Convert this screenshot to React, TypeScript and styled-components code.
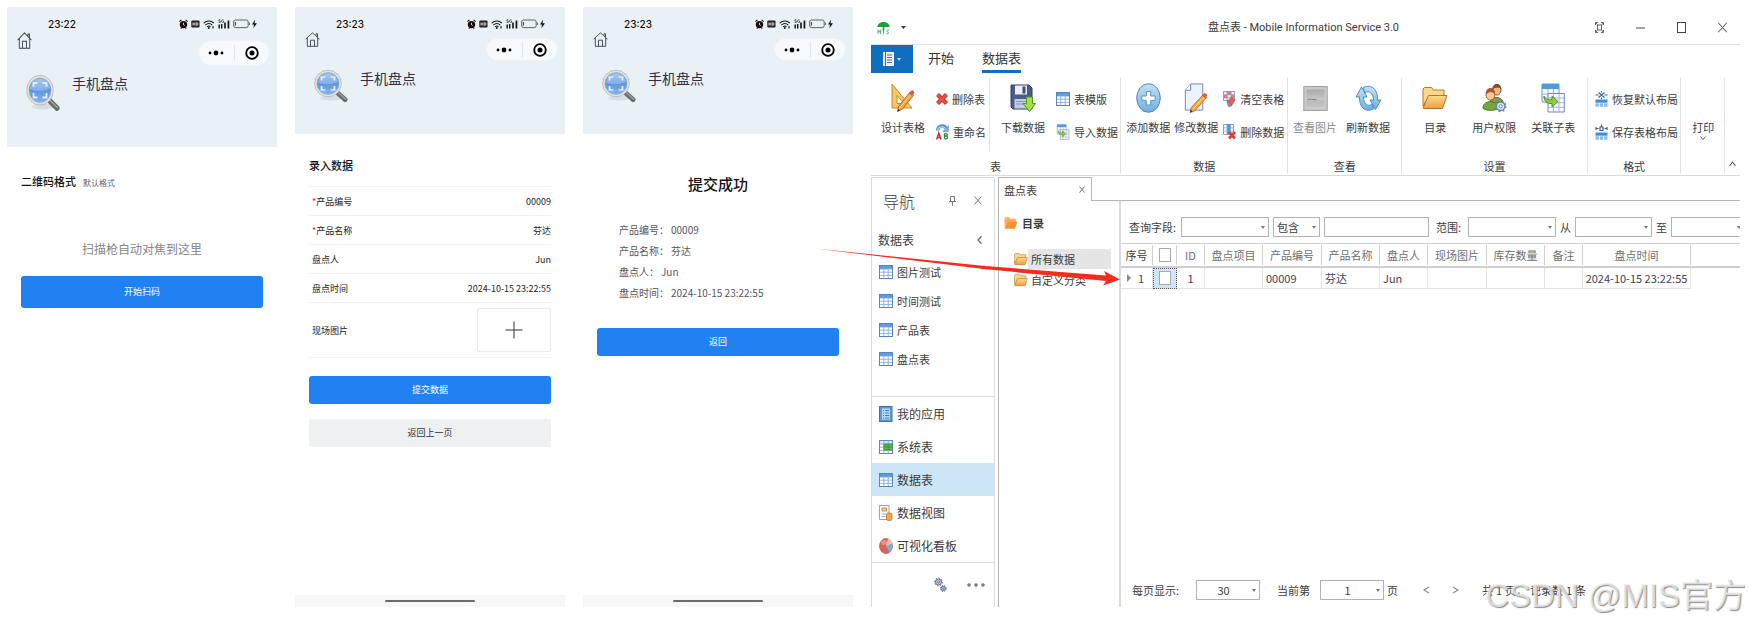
import React from 'react';
import styled, { createGlobalStyle, css } from 'styled-components';

const Global = createGlobalStyle`
  *, *::before, *::after { box-sizing: border-box; }
  body { margin: 0; background: #fff; overflow-x: hidden; }
  body, button, input, select {
    font-family: "Noto Sans CJK SC", "Noto Sans", sans-serif;
  }
  button { border: 0; padding: 0; margin: 0; background: none; color: inherit; cursor: pointer; }
  svg { display: block; flex: none; }
`;

const Page = styled.main`
  display: grid;
  grid-template-columns:
    minmax(0, 270fr) minmax(0, 270fr) minmax(0, 270fr) minmax(0, 869fr);
  column-gap: 18px;
  min-height: 100vh;
  padding: 7px 10px 19px 7px;
`;

/* ---------- phone screens ---------- */

const Phone = styled.section`
  display: flex;
  flex-direction: column;
  min-width: 0;
  color: #222;
`;

const PhoneHeader = styled.header<{ $tall?: boolean }>`
  height: ${p => (p.$tall ? 140 : 127)}px;
  padding: 9px 7px 0 10px;
  background: #e9f0f6;
`;

const StatusBar = styled.div`
  display: flex;
  align-items: center;
  justify-content: space-between;
  height: 16px;
  padding: 0 12px 0 31px;
  font: 500 10px/16px Inter, "Noto Sans", sans-serif;
  color: #111;
`;

const StatusIcons = styled.div`
  display: flex;
  align-items: center;
  gap: 3px;
`;

const PhoneNav = styled.div<{ $tall?: boolean }>`
  display: flex;
  justify-content: space-between;
  align-items: flex-start;
  height: ${p => (p.$tall ? 42 : 37)}px;
`;

const Capsule = styled.div<{ $tall?: boolean }>`
  display: flex;
  align-items: center;
  width: 72px;
  height: ${p => (p.$tall ? 26 : 23)}px;
  margin-top: ${p => (p.$tall ? 8 : 6)}px;
  border-radius: 13px;
  background: #f7fafc;
  border: 1px solid #eef3f7;
`;

const CapsuleButton = styled.button`
  display: flex;
  flex: 1;
  height: 16px;
  align-items: center;
  justify-content: center;
  & + & { border-left: 1px solid #e3e7eb; }
`;

const Brand = styled.div`
  display: flex;
  gap: 12px;
  padding-left: 9px;
`;

const BrandName = styled.h1`
  margin: 0;
  font-size: 14px;
  line-height: 18px;
  font-weight: 400;
  color: #2c2f45;
`;

const PhoneBody = styled.div`
  display: flex;
  flex: 1;
  flex-direction: column;
  padding: 0 14px;
`;

const FormatRow = styled.div`
  display: flex;
  align-items: baseline;
  gap: 7px;
  padding-top: 25px;
  line-height: 18px;
`;

const Heading = styled.h2`
  margin: 0;
  font-size: 11px;
  line-height: 18px;
  font-weight: 500;
  color: #111;
`;

const Hint = styled.span`
  font-size: 8px;
  color: #5d5a70;
`;

const FocusText = styled.p`
  margin: 48px 0 18px;
  font-size: 12px;
  line-height: 18px;
  text-align: center;
  color: #858585;
`;

const PhoneButton = styled.button<{ $plain?: boolean; $tall?: boolean }>`
  height: ${p => (p.$tall ? 32 : 28)}px;
  border-radius: 3px;
  font-size: 9px;
  line-height: 16px;
  background: ${p => (p.$plain ? '#eff0f2' : '#2082f2')};
  color: ${p => (p.$plain ? '#333' : '#fff')};
`;

const Form = styled.form`
  display: flex;
  flex-direction: column;
  padding-top: 22px;
  ${PhoneButton} { margin-top: 18px; }
  ${PhoneButton} + ${PhoneButton} { margin-top: 15px; }
`;

const Fields = styled.div`
  margin-top: 12px;
  border-top: 1px solid #f2f2f3;
`;

const Field = styled.div`
  display: flex;
  align-items: center;
  justify-content: space-between;
  min-height: 29px;
  padding-left: 3px;
  border-bottom: 1px solid #f2f2f3;
  font-size: 9px;
  color: #222;
  b { font-weight: 400; color: #e02020; }
`;

const FieldInput = styled.input`
  flex: 1;
  min-width: 0;
  padding: 0;
  border: 0;
  background: none;
  text-align: right;
  font-size: 9px;
  color: #222;
`;

const PhotoField = styled(Field)`
  height: 55px;
`;

const PhotoButton = styled.button`
  display: flex;
  align-items: center;
  justify-content: center;
  width: 74px;
  height: 44px;
  border: 1px solid #e9eaec;
  border-radius: 2px;
`;

const Success = styled.h2`
  margin: 39px 0 24px;
  font-size: 15px;
  line-height: 22px;
  font-weight: 500;
  text-align: center;
  color: #111;
`;

const Result = styled.dl`
  margin: 0 0 25px;
  padding-left: 22px;
  font-size: 10px;
  line-height: 21px;
  color: #55555f;
  div { display: flex; gap: 2px; }
  dt, dd { margin: 0; }
`;

const GestureBar = styled.div`
  display: flex;
  align-items: center;
  justify-content: center;
  height: 12px;
  background: #f7f7f7;
  &::before {
    content: '';
    width: 90px;
    height: 2px;
    border-radius: 1px;
    background: #6e6a6c;
  }
`;

const HomeIcon = ({ tall }: { tall?: boolean }) => (
  <svg width="15" height={tall ? 17 : 15} viewBox="0 0 15 15" preserveAspectRatio="none" fill="none" stroke="#3b4046" strokeWidth="0.9">
    <path d="M0.6 7.2 7.5.8l6.9 6.4M2.3 6v8.3h10.4V6M5.500 14.2V8.2h4v6M11 3.600V1.800h1.500V5" />
  </svg>
);

const StatusGlyphs = () => (
  <StatusIcons>
    <svg width="9" height="10" viewBox="0 0 9 10">
      <circle cx="4.5" cy="5.6" r="3.7" fill="#111" />
      <path d="M.4 2.6 2.4.8M8.6 2.6 6.6.8M1.8 9.6l.8-1M7.2 9.6l-.8-1" stroke="#111" strokeWidth="1.1" />
      <path d="M4.5 3.8v2l1.2.6" stroke="#fff" strokeWidth=".8" fill="none" />
    </svg>
    <svg width="9" height="8" viewBox="0 0 9 8">
      <rect x=".3" y=".5" width="8.2" height="7" rx="1" fill="#222" />
      <path d="M2 2.4v3.2M4 2.4v3.2M2 4h2M5.4 2.6v2.8h.7c1.2 0 1.2-2.8 0-2.8z" stroke="#fff" strokeWidth=".7" fill="none" />
    </svg>
    <svg width="12" height="9" viewBox="0 0 12 9" fill="none" stroke="#111" strokeWidth="1.1">
      <path d="M.7 3.1c3-2.8 7.2-2.8 10.2 0M2.4 5c2-1.8 4.8-1.8 6.8 0M4.2 6.7c1-.8 2.4-.8 3.3 0" />
      <circle cx="5.8" cy="8" r=".4" fill="#111" />
      <path d="M10 6v2.6" />
    </svg>
    <svg width="12" height="10" viewBox="0 0 12 10" fill="#111">
      <path d="M.5 5.5h1.4V9.6H.5zM3 5h1.4v4.6H3zM6.2 3.6h1.6v6H6.2zM9.6 1.6h1.7v8H9.6z" />
      <path d="M2.4.7H.9v1.4h1.2c.6 0 .6 1.4 0 1.4H.7M5.6 1C4.6.2 3.6.9 3.6 2.1s1 2 2 1.1V2.3H4.8" fill="none" stroke="#111" strokeWidth=".6" />
    </svg>
    <svg width="25" height="10" viewBox="0 0 25 10">
      <rect x=".6" y="1" width="14.6" height="7.6" rx="2" fill="none" stroke="#555" strokeWidth=".9" />
      <path d="M2.4 3v3.6" stroke="#333" strokeWidth="1" />
      <path d="M16.4 3.6v2.4" stroke="#555" strokeWidth="1" />
      <path d="M22 .6 19 5.6h2L20.400 9.200 24 4.200h-2.400z" fill="#111" />
    </svg>
  </StatusIcons>
);

const Magnifier = ({ tall }: { tall?: boolean }) => (
  <svg width="34" height={tall ? 38 : 34} viewBox="0 0 34 34" preserveAspectRatio="none">
    <ellipse cx="17" cy="29" rx="11" ry="2.600" fill="#c9d1d8" opacity=".6" />
    <path d="M22.500 23 31 30.500" stroke="#6a6e68" strokeWidth="5" strokeLinecap="round" />
    <path d="M24 23.400 31.400 30" stroke="#a5a9a1" strokeWidth="1.200" strokeLinecap="round" />
    <circle cx="14" cy="14.500" r="13.300" fill="#e6e5df" stroke="#b4b4ad" strokeWidth=".8" />
    <circle cx="14" cy="14.500" r="11" fill="url(#lens)" stroke="#9aa3ac" strokeWidth=".6" />
    <path d="M4 13.500c5 2.400 15 2.400 20-1A10.300 10.300 0 0 0 4 13.500z" fill="#b7d3f5" opacity=".45" />
    <g fill="none" stroke="#e4effb" strokeWidth="1.700">
      <path d="M7.500 11.500V8h4M16.500 8h4v3.500M20.500 17v4h-4M11.500 21h-4v-4" />
    </g>
  </svg>
);

const PhoneTop = ({ time, tall }: { time: string; tall?: boolean }) => (
  <PhoneHeader $tall={tall}>
    <StatusBar>
      <time>{time}</time>
      <StatusGlyphs />
    </StatusBar>
    <PhoneNav $tall={tall}>
      <button aria-label="主页"><HomeIcon tall={tall} /></button>
      <Capsule $tall={tall}>
        <CapsuleButton aria-label="更多">
          <svg width="16" height="6" viewBox="0 0 16 6"><circle cx="2" cy="3" r="1.400" /><circle cx="8" cy="3" r="2.400" /><circle cx="14" cy="3" r="1.400" /></svg>
        </CapsuleButton>
        <CapsuleButton aria-label="关闭">
          <svg width="14" height="14" viewBox="0 0 14 14"><circle cx="7" cy="7" r="5.800" fill="none" stroke="#000" strokeWidth="1.800" /><circle cx="7" cy="7" r="2.500" /></svg>
        </CapsuleButton>
      </Capsule>
    </PhoneNav>
    <Brand>
      <Magnifier tall={tall} />
      <BrandName>手机盘点</BrandName>
    </Brand>
  </PhoneHeader>
);

const ScanPhone = () => (
  <Phone>
    <PhoneTop time="23:22" tall />
    <PhoneBody>
      <FormatRow><Heading>二维码格式</Heading><Hint>默认格式</Hint></FormatRow>
      <FocusText>扫描枪自动对焦到这里</FocusText>
      <PhoneButton $tall>开始扫码</PhoneButton>
    </PhoneBody>
  </Phone>
);

const entryFields = [
  { id: 'code', label: '产品编号', value: '00009', required: true },
  { id: 'name', label: '产品名称', value: '芬达', required: true },
  { id: 'user', label: '盘点人', value: 'Jun' },
  { id: 'time', label: '盘点时间', value: '2024-10-15 23:22:55' },
];

const EntryPhone = () => (
  <Phone>
    <PhoneTop time="23:23" />
    <PhoneBody>
      <Form onSubmit={e => e.preventDefault()}>
        <Heading>录入数据</Heading>
        <Fields>
          {entryFields.map(f => (
            <Field key={f.id}>
              <label htmlFor={f.id}>{f.required && <b>*</b>}{f.label}</label>
              <FieldInput id={f.id} defaultValue={f.value} />
            </Field>
          ))}
          <PhotoField>
            <span id="photo">现场图片</span>
            <PhotoButton type="button" aria-labelledby="photo">
              <svg width="18" height="18" viewBox="0 0 18 18" stroke="#333" strokeWidth="1"><path d="M9 .5v17M.5 9h17" /></svg>
            </PhotoButton>
          </PhotoField>
        </Fields>
        <PhoneButton type="submit">提交数据</PhoneButton>
        <PhoneButton type="button" $plain>返回上一页</PhoneButton>
      </Form>
    </PhoneBody>
    <GestureBar />
  </Phone>
);

const DonePhone = () => (
  <Phone>
    <PhoneTop time="23:23" />
    <PhoneBody>
      <Success>提交成功</Success>
      <Result>
        {entryFields.map(f => (
          <div key={f.id}><dt>{f.label}：</dt><dd>{f.value}</dd></div>
        ))}
      </Result>
      <PhoneButton>返回</PhoneButton>
    </PhoneBody>
    <GestureBar />
  </Phone>
);

/* ---------- desktop window ---------- */

const Desktop = styled.section`
  position: relative;
  display: flex;
  flex-direction: column;
  min-width: 0;
  font-size: 11px;
  line-height: 16px;
  color: #3b3b3b;
`;

const TitleBar = styled.header`
  display: grid;
  grid-template-columns: 1fr auto 1fr;
  align-items: center;
  height: 38px;
  padding: 4px 10px 0 6px;
  border-bottom: 1px solid #dedede;
`;

const AppMark = styled.div`
  display: flex;
  align-items: center;
  gap: 11px;
`;

const WindowTitle = styled.h1`
  margin: 0;
  font: 400 11px/16px Roboto, "Noto Sans CJK SC", sans-serif;
  white-space: nowrap;
`;

const WindowButtons = styled.div`
  display: flex;
  justify-content: flex-end;
  gap: 25px;
  button { width: 16px; height: 16px; display: grid; place-items: center; }
`;

const RibbonTabs = styled.nav`
  display: flex;
  height: 28px;
  gap: 15px;
`;

const FileButton = styled.button`
  display: flex;
  align-items: center;
  justify-content: center;
  gap: 3px;
  width: 42px;
  background: #106ebe;
`;

const RibbonTab = styled.button<{ $active?: boolean }>`
  height: 28px;
  margin-right: 13px;
  font-size: 13px;
  line-height: 24px;
  color: #333;
  border-bottom: 3px solid ${p => (p.$active ? '#106ebe' : 'transparent')};
`;

const Ribbon = styled.div`
  display: flex;
  height: 103px;
  padding: 5px 0 1px;
  border-bottom: 1px solid #dcdcdc;
`;

const Group = styled.section<{ $share: number }>`
  display: flex;
  flex: ${p => p.$share} 1 0;
  min-width: 0;
  flex-direction: column;
  border-right: 1px solid #e2e2e2;
  h2 {
    margin: 0;
    font-size: 11px;
    line-height: 16px;
    font-weight: 400;
    text-align: center;
  }
`;

const GroupBody = styled.div<{ $pad?: number; $gap?: number }>`
  display: flex;
  height: 80px;
  padding: 5px 0 0 ${p => p.$pad ?? 3}px;
  gap: ${p => p.$gap ?? 0}px;
`;

const Divider = styled.i`
  width: 1px;
  height: 74px;
  margin: -5px 9px 0 3px;
  background: #e2e2e2;
`;

const BigButton = styled.button`
  display: flex;
  flex: none;
  flex-direction: column;
  align-items: center;
  gap: 6px;
  width: 48px;
  height: 54px;
  font-size: 11px;
  line-height: 16px;
  white-space: nowrap;
  &:disabled { color: #8a8a8a; }
  > svg { height: 30px; }
`;

const PrintButton = styled(BigButton)`
  width: 40px;
  height: 66px;
  padding-top: 36px;
  gap: 0;
  > svg { height: 6px; }
`;

const SmallStack = styled.div<{ $gap?: number }>`
  display: flex;
  flex-direction: column;
  gap: 17px;
  padding: 8px 0 0 ${p => p.$gap ?? 3}px;
`;

const SmallButton = styled.button`
  display: flex;
  align-items: center;
  gap: 4px;
  font-size: 11px;
  line-height: 16px;
  white-space: nowrap;
`;

const Collapse = styled.button`
  align-self: flex-end;
  width: 15px;
  height: 20px;
  display: grid;
  place-items: center;
`;

const Workspace = styled.div`
  display: flex;
  flex: 1;
  gap: 3px;
  padding-top: 1px;
`;

const NavPanel = styled.aside`
  display: flex;
  flex: none;
  flex-direction: column;
  width: 124px;
  border: solid #dcdcdc;
  border-width: 1px 1px 0;
`;

const NavTitle = styled.div`
  display: flex;
  align-items: center;
  height: 45px;
  padding: 0 12px 0 11px;
  h2 { flex: 1; margin: 0; font-size: 16px; line-height: 24px; font-weight: 300; }
  button + button { margin-left: 18px; }
`;

const NavHeading = styled.div`
  display: flex;
  align-items: center;
  justify-content: space-between;
  height: 34px;
  padding: 0 11px 0 6px;
  h3 { margin: 0; font-size: 12px; font-weight: 400; }
`;

const NavList = styled.div`
  display: flex;
  flex: 1;
  align-items: flex-start;
  justify-content: space-between;
  padding-right: 7px;
  ul { list-style: none; margin: 0; padding: 0; }
`;

const NavLink = styled.a<{ $large?: boolean; $active?: boolean }>`
  display: flex;
  align-items: center;
  gap: 4px;
  height: ${p => (p.$large ? 33 : 29)}px;
  padding-left: 7px;
  font-size: ${p => (p.$large ? 12 : 11)}px;
  color: #3b3b3b;
  text-decoration: none;
  background: ${p => (p.$active ? '#cce5f7' : 'none')};
`;

const NavModules = styled.nav`
  border: solid #dcdcdc;
  border-width: 1px 0;
`;

const NavFooter = styled.div`
  display: flex;
  align-items: center;
  justify-content: flex-end;
  gap: 20px;
  height: 44px;
  padding-right: 9px;
`;

const Content = styled.div`
  display: flex;
  flex: 1;
  min-width: 0;
  flex-direction: column;
`;

const DocTabs = styled.div`
  display: flex;
  height: 24px;
  &::after { content: ''; flex: 1; border-bottom: 1px solid #b5b5b5; }
`;

const DocTab = styled.div`
  display: flex;
  align-items: center;
  justify-content: space-between;
  width: 94px;
  padding: 0 6px 0 5px;
  border: solid #b5b5b5;
  border-width: 1px 1px 0;
`;

const DocArea = styled.div`
  display: flex;
  flex: 1;
  border-left: 1px solid #b5b5b5;
`;

const Tree = styled.aside`
  flex: none;
  width: 120px;
  padding: 12px 8px 0 5px;
  ul { list-style: none; margin: 15px 0 0 10px; padding: 0; }
  li { display: flex; align-items: center; height: 21px; }
`;

const TreeTitle = styled.div`
  display: flex;
  align-items: center;
  gap: 4px;
  height: 20px;
  h2 { margin: 0; font-size: 11px; font-weight: 700; }
`;

const TreeLink = styled.a<{ $active?: boolean }>`
  flex: 1;
  padding: 2px 0 2px 3px;
  color: #3b3b3b;
  text-decoration: none;
  background: ${p => (p.$active ? '#e5e5e5' : 'none')};
`;

const Main = styled.div`
  display: flex;
  flex: 1;
  min-width: 0;
  flex-direction: column;
  border-left: 2px solid #dadada;
`;

const Filters = styled.form`
  display: flex;
  align-items: center;
  gap: 4px;
  padding: 16px 0 6px 8px;
  overflow: hidden;
  label { flex: none; white-space: nowrap; }
`;

const QueryLabel = styled.label`
  width: 48px;
`;

const RangeLabel = styled.label`
  width: 31px;
  padding-left: 3px;
`;

const boxed = css`
  height: 20px;
  border: 1px solid #b3b3b3;
  border-radius: 0;
  background: #fff;
  font-size: 11px;
  line-height: 16px;
  color: #3b3b3b;
`;

const SelectBox = styled.span<{ $w: number }>`
  position: relative;
  flex: none;
  display: flex;
  width: ${p => p.$w}px;
  &::after {
    content: '';
    position: absolute;
    right: 4px;
    top: 9px;
    border: solid transparent;
    border-width: 3px 2px 0;
    border-top-color: #7b7b7b;
    pointer-events: none;
  }
`;

const Select = styled.select<{ $center?: boolean }>`
  ${boxed}
  appearance: none;
  width: 100%;
  padding: 0 12px 0 3px;
  text-align-last: ${p => (p.$center ? 'center' : 'left')};
`;

const TextBox = styled.input`
  ${boxed}
  flex: none;
  width: 105px;
`;

const DataTable = styled.table`
  width: 100%;
  table-layout: fixed;
  border-collapse: separate;
  border-spacing: 0;
  th, td { padding: 0; font-weight: 400; white-space: nowrap; text-align: center; }
  th { height: 25px; border-top: 1px solid #cfcfcf; border-bottom: 2px solid #cfcfcf; color: #6f6f6f; }
  th:first-child { color: #3b3b3b; }
  th > span { display: block; height: 20px; line-height: 20px; border-right: 1px solid #cfcfcf; }
  th:last-child > span { border: 0; }
  td { height: 21px; border-right: 1px solid #e3e3e3; border-bottom: 1px solid #e3e3e3; color: #454052; }
  td:last-child { border: 0; }
`;

const LeftCell = styled.td`
  && { text-align: left; padding-left: 3px; }
`;

const MarkedCell = styled.td`
  && { background: #cfe6f8; outline: 1px dotted #555; outline-offset: -1px; }
`;

const RowNumber = styled.span`
  display: flex;
  align-items: center;
  gap: 7px;
  padding-left: 6px;
`;

const Check = styled.input`
  appearance: none;
  display: block;
  width: 12px;
  height: 14px;
  margin: 0 auto;
  border: 1px solid #a9a9a9;
  background: #fff;
`;

const CheckHead = styled.span`
  padding-top: 3px;
`;

const Pager = styled.footer`
  display: flex;
  align-items: center;
  margin-top: auto;
  padding: 0 0 7px 11px;
  white-space: nowrap;
`;

const PagerLabel = styled.label<{ $w: number; $pad?: number }>`
  width: ${p => p.$w}px;
  padding-left: ${p => p.$pad ?? 0}px;
`;

const PagerButton = styled.button`
  display: grid;
  place-items: center;
  width: 29px;
  height: 20px;
`;

const Total = styled.p`
  display: flex;
  gap: 3px;
  margin: 0 0 0 12px;
`;

const Watermark = styled.div`
  position: absolute;
  right: -6px;
  bottom: -9px;
  font: 33px/40px "Liberation Sans", "Noto Sans CJK SC", sans-serif;
  color: rgba(240, 240, 240, 0.75);
  text-shadow: 1px 1px 1px #8c8c8c;
  white-space: nowrap;
  pointer-events: none;
`;

const ArrowLayer = styled.svg`
  position: absolute;
  left: -56px;
  top: 236px;
  pointer-events: none;
`;

/* ---------- icons ---------- */

const GridIcon = ({ green }: { green?: boolean }) => (
  <svg width="14" height="14" viewBox="0 0 14 14">
    <rect x=".5" y=".5" width="13" height="13" fill="#fff" stroke="#6f9fd4" />
    <path d="M.5.5h13v3.500H.5z" fill={green ? '#d6e7f8' : '#5b9bdc'} />
    {green && <path d="M5 4h8.500v6H5z" fill="#5fbe28" />}
    <path d="M.5 4h13M.5 7.200h13M.5 10.400h13M4.800 1v12.500M9.200 1v12.500" stroke="#79a3d6" strokeWidth=".8" fill="none" />
    {green && <path d="M5 4h8.500v6H5zM5 7h8.500M9.200 4v6" stroke="#2d8a1c" strokeWidth=".8" fill="none" />}
    <rect x=".5" y=".5" width="13" height="13" fill="none" stroke="#4f82bd" strokeWidth=".8" />
  </svg>
);

const FolderIcon = ({ size = 14, flat }: { size?: number; flat?: boolean }) => (
  <svg width={size} height={size} viewBox="0 0 26 24">
    <path d="M1 20V3l1.500-1.500h7L11.500 4H22v6H7z" fill={flat ? '#ffab5e' : '#fbd88a'} stroke={flat ? 'none' : '#b07a2c'} />
    <path d="M1.200 21.500 6.500 9.500H25L20.500 22.500H1.500z" fill={flat ? '#fb9333' : 'url(#folder)'} stroke={flat ? 'none' : '#b5752a'} />
  </svg>
);

const DeleteIcon = () => (
  <svg width="12" height="12" viewBox="0 0 12 12">
    <path d="m1.500 1.500 9 9M10.500 1.500l-9 9" stroke="#a8281e" strokeWidth="4" />
    <path d="m1.700 1.700 8.600 8.600M10.300 1.700l-8.600 8.600" stroke="#ea5145" strokeWidth="2.600" />
  </svg>
);

const DesignIcon = () => (
  <svg width="24" height="30" viewBox="0 0 24 30">
    <path d="M1 1v24h20zM6 12.500l7 8H6z" fill="#f7c566" stroke="#c28a37" fillRule="evenodd" />
    <path d="m6.500 28.500 1-5L19 9l3.500 3.500L11 26.500z" fill="#f3a33c" stroke="#a8542a" strokeWidth=".8" />
    <path d="m18 10 2.500-2.500c1-.8 3.500 1.500 2.600 2.800L21 13z" fill="#e5573f" />
    <path d="m8.500 25 11-13" stroke="#ffe09a" />
    <path d="m6.500 28.500.6-2.600 1.800 1.600z" fill="#222" />
  </svg>
);

const RenameIcon = () => (
  <svg width="13" height="16" viewBox="0 0 13 16" fill="none">
    <path d="M1.500 6.500C2 1.500 8 .5 10 4.500" stroke="#4d8cc9" strokeWidth="3.400" />
    <path d="M1.500 6C2.500 2 8 1.500 10 5" stroke="#a4d2f3" strokeWidth="1.500" />
    <path d="M12.600 1.500v6H7z" fill="#7bb8e6" stroke="#4d8cc9" strokeWidth=".6" />
    <path d="M.6 15.500 2.800 9l2.200 6.500M1.400 13.400h2.800" stroke="#d02828" strokeWidth="1.500" />
    <path d="M8.500 9.500v5.300M8.500 9.600h1.500c1.700 0 1.700 2.400 0 2.400H8.500M10 12c2 0 2 2.900 0 2.900H8.500" stroke="#2d8f38" strokeWidth="1.400" />
  </svg>
);

const SaveIcon = () => (
  <svg width="26" height="30" viewBox="0 0 26 30">
    <path d="M1 2h18l3 3v21H3l-2-2z" fill="#4b5d87" stroke="#2e3c60" />
    <path d="M5 2.500h12v9H5z" fill="#e9eef7" /><path d="M12.500 3.500h3v7h-3z" fill="#3f4f75" />
    <path d="M4.500 16h13v9.500h-13z" fill="#c5cee0" /><path d="M6 18.500h10M6 21h10" stroke="#8694b3" />
    <path d="M16.500 14h6v6.500h3L19.500 28.500 13 20.500h3.500z" fill="#a5df3f" stroke="#4b9a26" />
  </svg>
);

const MoveGridIcon = ({ size = 14 }: { size?: number }) => (
  <svg width={size} height={size === 14 ? 16 : 30} viewBox="0 0 24 30">
    <path d="M1 1h17v18H1z" fill="#f5f9ff" stroke="#6a94c8" />
    <path d="M1 1h17v5H1z" fill="#4f9cdc" /><path d="M1 11h17M1 15h17M7 6v13M12.500 6v13" stroke="#9cb8dc" />
    <path d="M7 10.500h16.300V29H7z" fill="#f8faff" stroke="#7287b8" /><path d="M7 15h16M7 19.700h16M7 24.300h16M12.400 11v18M18 11v18" stroke="#a5b2d5" />
    <path d="M3 13c1.500 4 5 4 8 3.500v-3.500l6 5.500-6 5.500v-3.500C6 21 3 18 3 13z" fill="#91ce36" stroke="#4d8f22" />
  </svg>
);

const AddIcon = () => (
  <svg width="25" height="30" viewBox="0 0 25 30">
    <ellipse cx="12.500" cy="15" rx="11.800" ry="14.300" fill="url(#blueBall)" stroke="#4f86bd" />
    <path d="M10.300 8.500h4.400V13h4.500v4.300h-4.500V22h-4.400v-4.700H5.800V13h4.500z" fill="#fff" stroke="#5b94c9" />
  </svg>
);

const EditIcon = () => (
  <svg width="24" height="31" viewBox="0 0 24 31">
    <path d="M6.500 1H19v27H1V7.500z" fill="#edf3fd" stroke="#6f83b6" /><path d="M6.500 1v6.500H1" fill="#fff" stroke="#6f83b6" />
    <path d="m6 30.500 1-5L19.500 12l3.500 3L10.500 29z" fill="#f5a93e" stroke="#a55d27" strokeWidth=".8" />
    <path d="m18.500 13 2-2.300c1-.8 3.600 1.300 2.800 2.700L21.500 16z" fill="#e0553f" /><path d="m8.800 27 11.500-12.300" stroke="#ffdf94" />
    <path d="m6 30.500.5-2.700 2 1.500z" fill="#222" />
  </svg>
);

const ClearIcon = () => (
  <svg width="13" height="16" viewBox="0 0 13 16">
    <path d="M.5.500h11v9H.5z" fill="#f9e6ea" stroke="#7a88c0" strokeWidth=".8" />
    <path d="M4 1h4v3H4zM1 4h3v3H1zM8 4h3v3H8z" fill="#e57b83" /><path d="M.5 3.700h11M.5 6.700h11M4.200.5v9M8 .5v9" stroke="#8b91c2" strokeWidth=".7" />
    <path d="m4 10.500 4.500-4 3.500 2-3.500 6.500H5.500z" fill="#ee5e4a" stroke="#933" strokeWidth=".5" /><path d="m4 10.500 3 1.500v3.500H5.500z" fill="#7aa5e0" stroke="#456fae" strokeWidth=".5" />
  </svg>
);

const RemoveIcon = () => (
  <svg width="13" height="16" viewBox="0 0 13 16">
    <path d="M.5.500h10v10H.5z" fill="#f4f9ff" stroke="#5a8bc6" strokeWidth=".8" /><path d="M4 .5h3.500v10H4z" fill="#4f8fd4" />
    <path d="M.5 3.800h10M.5 7.200h10M4 .5v10M7.500.500v10" stroke="#86abd9" strokeWidth=".7" />
    <path d="m6 8 6 6.500M12 8l-6 6.500" stroke="#dd3f35" strokeWidth="2.600" />
  </svg>
);

const PictureIcon = () => (
  <svg width="25" height="30" viewBox="0 0 25 30">
    <rect x=".8" y="3.500" width="23.400" height="24" fill="#c9c9c9" stroke="#a0a0a0" /><rect x="3.500" y="6.500" width="18" height="18" fill="url(#gray)" />
    <path d="M3.500 17.500c6-1 12 .5 18-.5v7.500h-18z" fill="#a8a8a8" opacity=".5" /><path d="M4.500 16.500c3-1 5 .6 9 0" stroke="#808080" fill="none" />
  </svg>
);

const RefreshIcon = () => (
  <svg width="27" height="30" viewBox="0 0 27 30" fill="url(#blueBall)" stroke="#3f83ba" strokeWidth=".9">
    <path d="M8.500 4.500C17 .5 23 7 22.500 17H26l-5.500 9.500L15 17h3.500C18.500 10.500 14 6.500 9.500 10z" />
    <path d="M18.500 26C10 30 4 24 4.500 14H1L6.500 4 12 14H8.500c0 6.500 4.500 10.500 9 7z" />
  </svg>
);

const UsersIcon = () => (
  <svg width="25" height="31" viewBox="0 0 25 31">
    <path d="M8 20c0-7 13-7 13.500 1z" fill="#8a9a42" stroke="#5b6f24" /><ellipse cx="15" cy="7" rx="4.200" ry="5.500" fill="#eebb86" stroke="#8b4c20" /><path d="M10.500 7c-.5-8 9-8 9 0-2-3-6-3-9 0z" fill="#8a4a20" />
    <path d="M.6 26c-.5-9 15.500-9 16 0-3 3-13 3-16 0z" fill="#77a63e" stroke="#4b7a22" /><ellipse cx="8.300" cy="12" rx="4.500" ry="5.800" fill="#f6c999" stroke="#9b5a28" /><path d="M3.500 12c-.5-9 10-9 9.600 0-2.600-3.500-6-3.500-9.600 0z" fill="#a55b26" />
    <circle cx="18.800" cy="24" r="4.400" fill="#dce7f5" stroke="#6584b0" strokeWidth="1.400" /><circle cx="18.800" cy="24" r="5.500" fill="none" stroke="#6584b0" strokeWidth="1.300" strokeDasharray="2 2.300" /><circle cx="18.800" cy="24" r="1.700" fill="#fff" stroke="#6584b0" />
  </svg>
);

const LayoutIcon = ({ restore }: { restore?: boolean }) => (
  <svg width="13" height="16" viewBox="0 0 13 16" fill="none">
    <path d="M.5 8.500h12v3.200H.5z" fill="#3f8ed8" /><path d="M.5 12.200h3.400v3.500H.5zM4.800 12.200h3.400v3.500H4.800zM9.100 12.200h3.400v3.500H9.100z" fill="#8dbbe8" />
    {restore ? <path d="M.5 4h3M9.500 4h3M3.500 1.500l6 5M9.500 1.500l-6 5M6.500 0v1.500M6.500 6.500V8" stroke="#3d5c85" strokeWidth="1.200" /> : <path d="M.5 4.500h3M9.500 4.500h3M1 3v3M12 3v3M5 3h3v3.500H5zM6.500 .5V3" stroke="#3d5c85" strokeWidth="1.200" />}
  </svg>
);

const AppsIcon = () => (
  <svg width="14" height="16" viewBox="0 0 14 16"><rect x=".5" y=".5" width="12.500" height="15" fill="#5c9ad6" stroke="#3d73ad" /><path d="M3 2.500h8v11H3z" fill="#b9d9f6" /><path d="M4 4.500h1M6 4.500h4M4 7h1M6 7h4M4 9.500h1M6 9.500h4M4 12h1M6 12h4" stroke="#3f78b5" /></svg>
);
const ViewIcon = () => (
  <svg width="14" height="16" viewBox="0 0 14 16"><path d="M.5.500h9.500v14H.5z" fill="#fff" stroke="#85a7cf" /><path d="M3 3h4.500v3H3z" fill="#fbd3a2" stroke="#e2862d" /><path d="M2.500 9h5M2.500 11.500h4" stroke="#8eb0da" /><path d="M7.500 9c0-1.400 5.500-1.400 5.500 0v5.500c0 1.400-5.500 1.400-5.500 0z" fill="#f5a837" stroke="#b86b1e" strokeWidth=".7" /></svg>
);
const PieIcon = () => (
  <svg width="14" height="16" viewBox="0 0 14 16"><ellipse cx="7" cy="8" rx="6.500" ry="7.500" fill="#d9645b" stroke="#a9473f" strokeWidth=".6" /><path d="M7 8 9 .8c4 1.500 5 4 4.300 5.500z" fill="#f5c0a0" /><path d="m7 8 6-2.500c1 4-.5 6.500-2.500 8.500z" fill="#78b0e2" /><ellipse cx="5" cy="4.500" rx="3" ry="2.500" fill="#fff" opacity=".3" /></svg>
);
const GearsIcon = () => (
  <svg width="13" height="16" viewBox="0 0 13 16" fill="#c8d1e6" stroke="#5d6c94"><circle cx="4.500" cy="5" r="3" /><circle cx="4.500" cy="5" r="3.900" fill="none" strokeDasharray="1.500 1.500" /><circle cx="4.500" cy="5" r="1" fill="#fff" /><circle cx="9.300" cy="11.500" r="2.200" /><circle cx="9.300" cy="11.500" r="3" fill="none" strokeDasharray="1.200 1.200" /><circle cx="9.300" cy="11.500" r=".7" fill="#fff" /></svg>
);
const Chevron = ({ d, color = '#666' }: { d: string; color?: string }) => (
  <svg width="7" height="8" viewBox="0 0 7 8" fill="none" stroke={color} strokeWidth="1.200"><path d={d} /></svg>
);

/* ---------- desktop parts ---------- */

const Title = () => (
  <TitleBar>
    <AppMark>
      <svg width="13" height="14" viewBox="0 0 13 14">
        <path d="M.3 6C1-.8 12-.8 12.700 6z" fill="#1ba237" /><path d="M5.700 5h1.600v5H5.700z" fill="#1ba237" />
        <path d="M1 13V8.800l1.300 2.500L3.600 8.800V13M6.500 10v3.200M12 9.300c-1.500-1-3 .5-1.500 1.500 2 .8 1 2.800-1.200 1.700" stroke="#4fb765" fill="none" />
      </svg>
      <svg width="5" height="3" viewBox="0 0 5 3"><path d="M0 0h5L2.500 3z" fill="#333" /></svg>
    </AppMark>
    <WindowTitle>盘点表 - Mobile Information Service 3.0</WindowTitle>
    <WindowButtons>
      <button aria-label="全屏"><svg width="9" height="11" viewBox="0 0 9 11" fill="none" stroke="#555" strokeWidth=".9"><path d="M.5 3V.5H3M6 .5h2.500V3M8.500 8v2.500H6M3 10.500H.5V8M2.500 3h4v5h-4zM1 1l1.500 2M8 1 6.500 3M1 10l1.500-2M8 10 6.500 8" /></svg></button>
      <button aria-label="最小化"><svg width="9" height="2"><path d="M0 1h9" stroke="#444" /></svg></button>
      <button aria-label="最大化"><svg width="9" height="11"><rect x=".5" y=".5" width="8" height="10" fill="none" stroke="#444" /></svg></button>
      <button aria-label="关闭窗口"><svg width="9" height="11" stroke="#444"><path d="m0 .5 9 10M9 .5l-9 10" /></svg></button>
    </WindowButtons>
  </TitleBar>
);

const RibbonBar = () => (
  <>
    <RibbonTabs>
      <FileButton aria-label="文件">
        <svg width="11" height="14" viewBox="0 0 11 14"><path d="M.5.500h10v13H.5z" fill="#e8eef4" stroke="#fff" /><path d="M2.500 0v14" stroke="#4a6c8e" /><path d="M4 3h5M4 5.500h5M4 8h5M4 10.500h5" stroke="#5b6f82" /></svg>
        <svg width="4" height="3"><path d="M0 0h4L2 3z" fill="#cfe2f3" /></svg>
      </FileButton>
      <RibbonTab>开始</RibbonTab>
      <RibbonTab $active>数据表</RibbonTab>
    </RibbonTabs>
    <Ribbon>
      <Group $share={251}>
        <GroupBody $pad={8}>
          <BigButton><DesignIcon />设计表格</BigButton>
          <SmallStack $gap={9}>
            <SmallButton><DeleteIcon />删除表</SmallButton>
            <SmallButton><RenameIcon />重命名</SmallButton>
          </SmallStack>
          <Divider />
          <BigButton><SaveIcon />下载数据</BigButton>
          <SmallStack $gap={9}>
            <SmallButton><GridIcon />表模版</SmallButton>
            <SmallButton><MoveGridIcon />导入数据</SmallButton>
          </SmallStack>
        </GroupBody>
        <h2>表</h2>
      </Group>
      <Group $share={167}>
        <GroupBody>
          <BigButton><AddIcon />添加数据</BigButton>
          <BigButton><EditIcon />修改数据</BigButton>
          <SmallStack>
            <SmallButton><ClearIcon />清空表格</SmallButton>
            <SmallButton><RemoveIcon />删除数据</SmallButton>
          </SmallStack>
        </GroupBody>
        <h2>数据</h2>
      </Group>
      <Group $share={114}>
        <GroupBody $gap={5}>
          <BigButton disabled><PictureIcon />查看图片</BigButton>
          <BigButton><RefreshIcon />刷新数据</BigButton>
        </GroupBody>
        <h2>查看</h2>
      </Group>
      <Group $share={186}>
        <GroupBody $pad={9} $gap={11}>
          <BigButton><FolderIcon size={26} />目录</BigButton>
          <BigButton><UsersIcon />用户权限</BigButton>
          <BigButton><MoveGridIcon size={24} />关联子表</BigButton>
        </GroupBody>
        <h2>设置</h2>
      </Group>
      <Group $share={93}>
        <GroupBody $pad={4}>
          <SmallStack>
            <SmallButton><LayoutIcon restore />恢复默认布局</SmallButton>
            <SmallButton><LayoutIcon />保存表格布局</SmallButton>
          </SmallStack>
        </GroupBody>
        <h2>格式</h2>
      </Group>
      <Group $share={43}>
        <GroupBody $pad={2}>
          <PrintButton>打印<svg width="6" height="6" viewBox="0 0 6 6" fill="none" stroke="#666"><path d="m.5 1.500 2.500 3 2.500-3" /></svg></PrintButton>
        </GroupBody>
      </Group>
      <Collapse aria-label="折叠功能区"><Chevron d="M.5 6 3.500 2l3 4" /></Collapse>
    </Ribbon>
  </>
);

const modules = [
  { name: '我的应用', icon: <AppsIcon /> },
  { name: '系统表', icon: <GridIcon green /> },
  { name: '数据表', icon: <GridIcon />, active: true },
  { name: '数据视图', icon: <ViewIcon /> },
  { name: '可视化看板', icon: <PieIcon /> },
];

const Navigation = () => (
  <NavPanel>
    <NavTitle>
      <h2>导航</h2>
      <button aria-label="固定"><svg width="7" height="10" viewBox="0 0 7 10" fill="none" stroke="#777"><path d="M1.500.500h4v5h-4zM0 5.500h7M3.500 6v4" /></svg></button>
      <button aria-label="关闭导航"><svg width="8" height="9" stroke="#777"><path d="m.5.500 7 8M7.500.500l-7 8" /></svg></button>
    </NavTitle>
    <NavHeading><h3>数据表</h3><button aria-label="收起"><Chevron d="M5.500 0 2 4l3.500 4" /></button></NavHeading>
    <NavList>
      <ul>
        {['图片测试', '时间测试', '产品表', '盘点表'].map(t => (
          <li key={t}><NavLink href="#"><GridIcon />{t}</NavLink></li>
        ))}
      </ul>
      <svg width="6" height="12"><path d="M0 12h6L3 8z" fill="#777" /></svg>
    </NavList>
    <NavModules>
      {modules.map(m => (
        <NavLink key={m.name} href="#" $large $active={m.active}>{m.icon}{m.name}</NavLink>
      ))}
    </NavModules>
    <NavFooter>
      <button aria-label="设置"><GearsIcon /></button>
      <button aria-label="更多模块"><svg width="18" height="4" fill="#777"><circle cx="2" cy="2" r="1.800" /><circle cx="9" cy="2" r="1.800" /><circle cx="16" cy="2" r="1.800" /></svg></button>
    </NavFooter>
  </NavPanel>
);

const FilterBar = () => (
  <Filters onSubmit={e => e.preventDefault()}>
    <QueryLabel htmlFor="q-field">查询字段:</QueryLabel>
    <SelectBox $w={88}><Select id="q-field" /></SelectBox>
    <SelectBox $w={47}><Select aria-label="匹配方式"><option>包含</option></Select></SelectBox>
    <TextBox aria-label="查询内容" />
    <RangeLabel htmlFor="q-range">范围:</RangeLabel>
    <SelectBox $w={88}><Select id="q-range" /></SelectBox>
    <label htmlFor="q-from">从</label>
    <SelectBox $w={77}><Select id="q-from" /></SelectBox>
    <label htmlFor="q-to">至</label>
    <SelectBox $w={74}><Select id="q-to" /></SelectBox>
  </Filters>
);

const columns: [string, number][] = [
  ['序号', 32], ['', 24], ['ID', 28], ['盘点项目', 58], ['产品编号', 59], ['产品名称', 58],
  ['盘点人', 48], ['现场图片', 59], ['库存数量', 58], ['备注', 38], ['盘点时间', 108],
];

const Records = () => (
  <DataTable>
    <colgroup>{columns.map(([, w], i) => <col key={i} width={w} />)}<col /></colgroup>
    <thead>
      <tr>
        {columns.map(([name], i) => (
          <th key={i}>
            {name ? <span>{name}</span> : <CheckHead><Check type="checkbox" aria-label="全选" /></CheckHead>}
          </th>
        ))}
        <th><span /></th>
      </tr>
    </thead>
    <tbody>
      <tr>
        <td><RowNumber><svg width="4" height="8"><path d="M0 0v8l4-4z" fill="#888" /></svg>1</RowNumber></td>
        <MarkedCell><Check type="checkbox" aria-label="选择第1行" /></MarkedCell>
        <td>1</td>
        <td />
        <LeftCell>00009</LeftCell>
        <LeftCell>芬达</LeftCell>
        <LeftCell>Jun</LeftCell>
        <td /><td /><td />
        <td>2024-10-15 23:22:55</td>
        <td />
      </tr>
    </tbody>
  </DataTable>
);

const Paging = () => (
  <Pager>
    <PagerLabel htmlFor="p-size" $w={64}>每页显示:</PagerLabel>
    <SelectBox $w={64}><Select id="p-size" $center><option>30</option></Select></SelectBox>
    <PagerLabel htmlFor="p-no" $w={60} $pad={17}>当前第</PagerLabel>
    <SelectBox $w={64}><Select id="p-no" $center><option>1</option></Select></SelectBox>
    <PagerLabel htmlFor="p-no" $w={28} $pad={3}>页</PagerLabel>
    <PagerButton aria-label="上一页"><Chevron d="M6 1 1 4l5 3" color="#888" /></PagerButton>
    <PagerButton aria-label="下一页"><Chevron d="m1 1 5 3-5 3" color="#888" /></PagerButton>
    <Total><span>共</span><span>1</span><span>页，</span><span>记录数</span><span>1</span><span>条</span></Total>
  </Pager>
);

const RedArrow = () => (
  <ArrowLayer width="308" height="50" viewBox="0 0 308 50" aria-hidden="true">
    <defs>
      <linearGradient id="lens" x1="0" y1="0" x2="0" y2="1"><stop offset="0" stopColor="#9cc0ee" /><stop offset=".5" stopColor="#5c95dc" /><stop offset="1" stopColor="#86b6ee" /></linearGradient>
      <linearGradient id="folder" x1="0" y1="0" x2="0" y2="1"><stop offset="0" stopColor="#fddc92" /><stop offset="1" stopColor="#ee9d3c" /></linearGradient>
      <linearGradient id="blueBall" x1="0" y1="0" x2="0" y2="1"><stop offset="0" stopColor="#c3e2f6" /><stop offset="1" stopColor="#6faedd" /></linearGradient>
      <linearGradient id="gray" x1="0" y1="0" x2="0" y2="1"><stop offset="0" stopColor="#a8a8a8" /><stop offset="1" stopColor="#e2e2e2" /></linearGradient>
    </defs>
    <path d="M0 5.500 170 23 291 32.500 289 28 305 36.500 288 42.500 291 38 169 26z" fill="#fb2a1c" />
  </ArrowLayer>
);

export default function App() {
  return (
    <>
      <Global />
      <Page>
        <ScanPhone />
        <EntryPhone />
        <DonePhone />
        <Desktop>
          <Title />
          <RibbonBar />
          <Workspace>
            <Navigation />
            <Content>
              <DocTabs><DocTab>盘点表<button aria-label="关闭标签"><svg width="6" height="7" stroke="#777"><path d="m.5.500 5 6M5.500.500l-5 6" /></svg></button></DocTab></DocTabs>
              <DocArea>
                <Tree>
                  <TreeTitle><FolderIcon flat /><h2>目录</h2></TreeTitle>
                  <ul>
                    <li><FolderIcon /><TreeLink href="#" $active>所有数据</TreeLink></li>
                    <li><FolderIcon /><TreeLink href="#">自定义分类</TreeLink></li>
                  </ul>
                </Tree>
                <Main>
                  <FilterBar />
                  <Records />
                  <Paging />
                </Main>
              </DocArea>
            </Content>
          </Workspace>
          <RedArrow />
          <Watermark>CSDN @MIS官方</Watermark>
        </Desktop>
      </Page>
    </>
  );
}
